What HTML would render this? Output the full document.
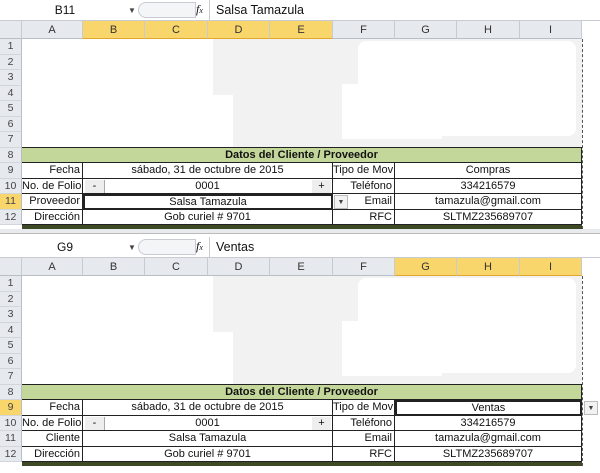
<!DOCTYPE html>
<html><head><meta charset="utf-8"><style>
*{margin:0;padding:0;box-sizing:border-box}
body{width:600px;height:471px;background:#fff;position:relative;overflow:hidden;font-family:"Liberation Sans",sans-serif;font-size:11px;color:#111}
.p{position:absolute;left:0;width:600px;height:236px}
.a{position:absolute}
.fb{top:0;left:0;width:600px;height:21px;background:#fff;border-bottom:1px solid #c8ccd2}
.nb{left:0;top:1px;width:130px;height:18px;text-align:center;line-height:18px;font-size:12px}
.hd{top:21px;height:18px;background:#e6e9ee;border-right:1px solid #c5cbd3;border-bottom:1px solid #b8bec6;text-align:center;line-height:18px;font-size:11px;color:#333}
.hs{background:#f8d66b;color:#333;border-bottom:1px solid #e0a72c}
.rh{left:0;width:22px;height:15.5px;background:#e6e9ee;border-right:1px solid #b8bec6;border-bottom:1px solid #d2d6db;text-align:center;line-height:15px;font-size:10.5px;color:#444}
.rs{background:#f8d66b}
.c{height:15.5px;line-height:15px;border-bottom:1px solid #222;border-right:1px solid #222;white-space:nowrap;overflow:hidden;font-size:11px}
.r{text-align:right;padding-right:2px}
.m{text-align:center}
</style></head><body>

<!-- PANE 1 -->
<div class="p" style="top:0">
 <div class="a fb"></div>
 <div class="a nb">B11</div>
 <div class="a" style="left:128px;top:6px;font-size:8px;color:#444">▼</div>
 <div class="a" style="left:138px;top:2px;width:58px;height:16px;border:1px solid #c8ccd2;border-radius:8px 0 0 8px;background:#f4f5f7"></div>
 <div class="a" style="left:196px;top:2px;font-style:italic;font-family:'Liberation Serif',serif;font-size:12px">f<span style="font-size:8px">x</span></div>
 <div class="a" style="left:209px;top:0;width:1px;height:21px;background:#c8ccd2"></div>
 <div class="a" style="left:216px;top:3px;font-size:12.5px">Salsa Tamazula</div>

 <div class="a hd" style="left:0;width:22px"></div>
 <div class="a hd" style="left:22px;width:61px">A</div>
 <div class="a hd hs" style="left:83px;width:62px">B</div>
 <div class="a hd hs" style="left:145px;width:63px">C</div>
 <div class="a hd hs" style="left:208px;width:62px">D</div>
 <div class="a hd hs" style="left:270px;width:63px">E</div>
 <div class="a hd" style="left:333px;width:62px">F</div>
 <div class="a hd" style="left:395px;width:62px">G</div>
 <div class="a hd" style="left:457px;width:63px">H</div>
 <div class="a hd" style="left:520px;width:62px">I</div>

 <div class="a" style="left:213px;top:39px;width:369px;height:108px;background:#f2f2f2"></div>
 <div class="a" style="left:358px;top:41px;width:218px;height:95px;background:#fff;border-radius:8px"></div>
 <div class="a" style="left:342px;top:84px;width:100px;height:55px;background:#fff"></div>
 <div class="a" style="left:213px;top:95px;width:20px;height:52px;background:#fff"></div>
 <div class="a" style="left:582px;top:39px;width:1px;height:190px;border-left:1px dashed #555"></div>

 <div class="a rh" style="top:39px">1</div>
 <div class="a rh" style="top:54.5px">2</div>
 <div class="a rh" style="top:70px">3</div>
 <div class="a rh" style="top:85.5px">4</div>
 <div class="a rh" style="top:101px">5</div>
 <div class="a rh" style="top:116.5px">6</div>
 <div class="a rh" style="top:132px">7</div>
 <div class="a rh" style="top:147.5px">8</div>
 <div class="a rh" style="top:163px">9</div>
 <div class="a rh" style="top:178.5px">10</div>
 <div class="a rh rs" style="top:194px">11</div>
 <div class="a rh" style="top:209.5px">12</div>

 <div class="a c m" style="left:22px;top:147px;width:560px;height:16px;background:#c4d79b;font-weight:bold;border-top:1px solid #222">Datos del Cliente / Proveedor</div>
 <div class="a c r" style="left:22px;top:163px;width:61px">Fecha</div>
 <div class="a c m" style="left:83px;top:163px;width:250px">sábado, 31 de octubre de 2015</div>
 <div class="a c r" style="left:333px;top:163px;width:62px">Tipo de Mov</div>
 <div class="a c m" style="left:395px;top:163px;width:187px">Compras</div>
 <div class="a c r" style="left:22px;top:178.5px;width:61px">No. de Folio</div>
 <div class="a c m" style="left:83px;top:178.5px;width:250px">0001</div>
 <div class="a" style="left:85px;top:180px;width:20px;height:13px;background:#eee;border-right:1px solid #aaa;text-align:center;line-height:12px">-</div>
 <div class="a" style="left:312px;top:180px;width:19px;height:13px;background:#eee;text-align:center;line-height:13px">+</div>
 <div class="a c r" style="left:333px;top:178.5px;width:62px">Teléfono</div>
 <div class="a c m" style="left:395px;top:178.5px;width:187px">334216579</div>
 <div class="a c r" style="left:22px;top:194px;width:61px">Proveedor</div>
 <div class="a c m" style="left:83px;top:194px;width:250px;border:2px solid #222;line-height:12px">Salsa Tamazula</div>
 <div class="a c r" style="left:333px;top:194px;width:62px;background:transparent">Email</div>
 <div class="a" style="left:334px;top:195px;width:14px;height:14px;background:#f2f2f2;border:1px solid #bbb;font-size:7px;text-align:center;line-height:13px;color:#444">▼</div>
 <div class="a c m" style="left:395px;top:194px;width:187px">tamazula@gmail.com</div>
 <div class="a c r" style="left:22px;top:209.5px;width:61px">Dirección</div>
 <div class="a c m" style="left:83px;top:209.5px;width:250px">Gob curiel # 9701</div>
 <div class="a c r" style="left:333px;top:209.5px;width:62px">RFC</div>
 <div class="a c m" style="left:395px;top:209.5px;width:187px">SLTMZ235689707</div>
 <div class="a" style="left:22px;top:225px;width:560px;height:4px;background:#3d4a25"></div>
 <div class="a" style="left:0;top:229px;width:600px;height:5px;background:#e8eaed;border-bottom:1px solid #bbb"></div>
</div>

<!-- PANE 2 -->
<div class="p" style="top:237px">
 <div class="a fb"></div>
 <div class="a nb">G9</div>
 <div class="a" style="left:128px;top:6px;font-size:8px;color:#444">▼</div>
 <div class="a" style="left:138px;top:2px;width:58px;height:16px;border:1px solid #c8ccd2;border-radius:8px 0 0 8px;background:#f4f5f7"></div>
 <div class="a" style="left:196px;top:2px;font-style:italic;font-family:'Liberation Serif',serif;font-size:12px">f<span style="font-size:8px">x</span></div>
 <div class="a" style="left:209px;top:0;width:1px;height:21px;background:#c8ccd2"></div>
 <div class="a" style="left:216px;top:3px;font-size:12.5px">Ventas</div>

 <div class="a hd" style="left:0;width:22px"></div>
 <div class="a hd" style="left:22px;width:61px">A</div>
 <div class="a hd" style="left:83px;width:62px">B</div>
 <div class="a hd" style="left:145px;width:63px">C</div>
 <div class="a hd" style="left:208px;width:62px">D</div>
 <div class="a hd" style="left:270px;width:63px">E</div>
 <div class="a hd" style="left:333px;width:62px">F</div>
 <div class="a hd hs" style="left:395px;width:62px">G</div>
 <div class="a hd hs" style="left:457px;width:63px">H</div>
 <div class="a hd hs" style="left:520px;width:62px">I</div>

 <div class="a" style="left:213px;top:39px;width:369px;height:108px;background:#f2f2f2"></div>
 <div class="a" style="left:358px;top:41px;width:218px;height:95px;background:#fff;border-radius:8px"></div>
 <div class="a" style="left:342px;top:84px;width:100px;height:55px;background:#fff"></div>
 <div class="a" style="left:213px;top:95px;width:20px;height:52px;background:#fff"></div>
 <div class="a" style="left:582px;top:39px;width:1px;height:190px;border-left:1px dashed #555"></div>

 <div class="a rh" style="top:39px">1</div>
 <div class="a rh" style="top:54.5px">2</div>
 <div class="a rh" style="top:70px">3</div>
 <div class="a rh" style="top:85.5px">4</div>
 <div class="a rh" style="top:101px">5</div>
 <div class="a rh" style="top:116.5px">6</div>
 <div class="a rh" style="top:132px">7</div>
 <div class="a rh" style="top:147.5px">8</div>
 <div class="a rh rs" style="top:163px">9</div>
 <div class="a rh" style="top:178.5px">10</div>
 <div class="a rh" style="top:194px">11</div>
 <div class="a rh" style="top:209.5px">12</div>

 <div class="a c m" style="left:22px;top:147px;width:560px;height:16px;background:#c4d79b;font-weight:bold;border-top:1px solid #222">Datos del Cliente / Proveedor</div>
 <div class="a c r" style="left:22px;top:163px;width:61px">Fecha</div>
 <div class="a c m" style="left:83px;top:163px;width:250px">sábado, 31 de octubre de 2015</div>
 <div class="a c r" style="left:333px;top:163px;width:62px">Tipo de Mov</div>
 <div class="a c m" style="left:395px;top:163px;width:187px;border:2px solid #222;line-height:12px">Ventas</div>
 <div class="a" style="left:584px;top:164px;width:14px;height:14px;background:#f2f2f2;border:1px solid #bbb;font-size:7px;text-align:center;line-height:13px;color:#444">▼</div>
 <div class="a c r" style="left:22px;top:178.5px;width:61px">No. de Folio</div>
 <div class="a c m" style="left:83px;top:178.5px;width:250px">0001</div>
 <div class="a" style="left:85px;top:180px;width:20px;height:13px;background:#eee;border-right:1px solid #aaa;text-align:center;line-height:12px">-</div>
 <div class="a" style="left:312px;top:180px;width:19px;height:13px;background:#eee;text-align:center;line-height:13px">+</div>
 <div class="a c r" style="left:333px;top:178.5px;width:62px">Teléfono</div>
 <div class="a c m" style="left:395px;top:178.5px;width:187px">334216579</div>
 <div class="a c r" style="left:22px;top:194px;width:61px">Cliente</div>
 <div class="a c m" style="left:83px;top:194px;width:250px">Salsa Tamazula</div>
 <div class="a c r" style="left:333px;top:194px;width:62px">Email</div>
 <div class="a c m" style="left:395px;top:194px;width:187px">tamazula@gmail.com</div>
 <div class="a c r" style="left:22px;top:209.5px;width:61px">Dirección</div>
 <div class="a c m" style="left:83px;top:209.5px;width:250px">Gob curiel # 9701</div>
 <div class="a c r" style="left:333px;top:209.5px;width:62px">RFC</div>
 <div class="a c m" style="left:395px;top:209.5px;width:187px">SLTMZ235689707</div>
 <div class="a" style="left:22px;top:225px;width:560px;height:4px;background:#3d4a25"></div>
</div>
</body></html>
